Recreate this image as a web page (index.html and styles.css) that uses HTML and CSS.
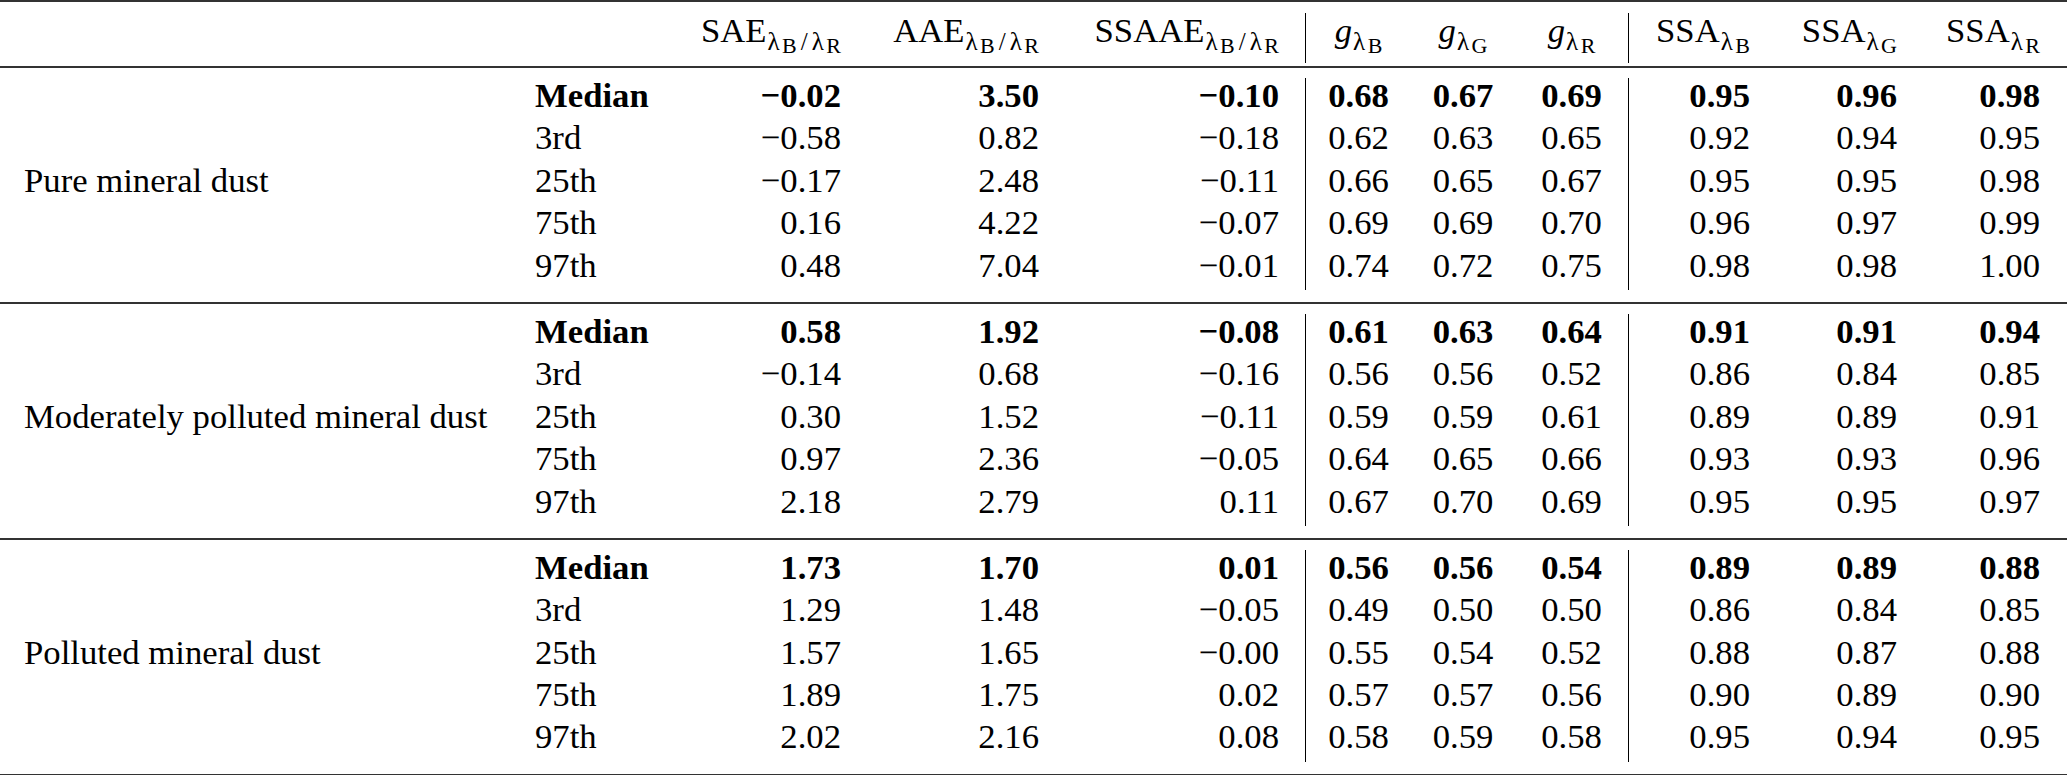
FILE: index.html
```html
<!DOCTYPE html>
<html>
<head>
<meta charset="utf-8">
<link rel="stylesheet" href="styles.css">
</head>
<body>
<div class="tbl">
  <div class="grid head">
    <div class="cell"></div>
    <div class="cell"></div>
    <div class="cell num">SAE<span class="sub">λ<span class="ssub">B</span><span class="slash">/</span>λ<span class="ssub">R</span></span></div>
    <div class="cell num">AAE<span class="sub">λ<span class="ssub">B</span><span class="slash">/</span>λ<span class="ssub">R</span></span></div>
    <div class="cell num wide">SSAAE<span class="sub">λ<span class="ssub">B</span><span class="slash">/</span>λ<span class="ssub">R</span></span></div>
    <div class="cell ctr vl"><i>g</i><span class="sub">λ<span class="ssub">B</span></span></div>
    <div class="cell ctr"><i>g</i><span class="sub">λ<span class="ssub">G</span></span></div>
    <div class="cell ctr"><i>g</i><span class="sub">λ<span class="ssub">R</span></span></div>
    <div class="cell num vl">SSA<span class="sub">λ<span class="ssub">B</span></span></div>
    <div class="cell num">SSA<span class="sub">λ<span class="ssub">G</span></span></div>
    <div class="cell num last">SSA<span class="sub">λ<span class="ssub">R</span></span></div>
  </div>

  <div class="grid grp">
    <div class="cell glabel">Pure mineral dust</div>
    <div class="cell stat b">Median</div><div class="cell num b">−0.02</div><div class="cell num b">3.50</div><div class="cell num wide b">−0.10</div><div class="cell ctr vl b">0.68</div><div class="cell ctr b">0.67</div><div class="cell ctr b">0.69</div><div class="cell num vl b">0.95</div><div class="cell num b">0.96</div><div class="cell num last b">0.98</div>
    <div class="cell stat">3rd</div><div class="cell num">−0.58</div><div class="cell num">0.82</div><div class="cell num wide">−0.18</div><div class="cell ctr vl">0.62</div><div class="cell ctr">0.63</div><div class="cell ctr">0.65</div><div class="cell num vl">0.92</div><div class="cell num">0.94</div><div class="cell num last">0.95</div>
    <div class="cell stat">25th</div><div class="cell num">−0.17</div><div class="cell num">2.48</div><div class="cell num wide">−0.11</div><div class="cell ctr vl">0.66</div><div class="cell ctr">0.65</div><div class="cell ctr">0.67</div><div class="cell num vl">0.95</div><div class="cell num">0.95</div><div class="cell num last">0.98</div>
    <div class="cell stat">75th</div><div class="cell num">0.16</div><div class="cell num">4.22</div><div class="cell num wide">−0.07</div><div class="cell ctr vl">0.69</div><div class="cell ctr">0.69</div><div class="cell ctr">0.70</div><div class="cell num vl">0.96</div><div class="cell num">0.97</div><div class="cell num last">0.99</div>
    <div class="cell stat">97th</div><div class="cell num">0.48</div><div class="cell num">7.04</div><div class="cell num wide">−0.01</div><div class="cell ctr vl">0.74</div><div class="cell ctr">0.72</div><div class="cell ctr">0.75</div><div class="cell num vl">0.98</div><div class="cell num">0.98</div><div class="cell num last">1.00</div>
  </div>

  <div class="grid grp">
    <div class="cell glabel">Moderately polluted mineral dust</div>
    <div class="cell stat b">Median</div><div class="cell num b">0.58</div><div class="cell num b">1.92</div><div class="cell num wide b">−0.08</div><div class="cell ctr vl b">0.61</div><div class="cell ctr b">0.63</div><div class="cell ctr b">0.64</div><div class="cell num vl b">0.91</div><div class="cell num b">0.91</div><div class="cell num last b">0.94</div>
    <div class="cell stat">3rd</div><div class="cell num">−0.14</div><div class="cell num">0.68</div><div class="cell num wide">−0.16</div><div class="cell ctr vl">0.56</div><div class="cell ctr">0.56</div><div class="cell ctr">0.52</div><div class="cell num vl">0.86</div><div class="cell num">0.84</div><div class="cell num last">0.85</div>
    <div class="cell stat">25th</div><div class="cell num">0.30</div><div class="cell num">1.52</div><div class="cell num wide">−0.11</div><div class="cell ctr vl">0.59</div><div class="cell ctr">0.59</div><div class="cell ctr">0.61</div><div class="cell num vl">0.89</div><div class="cell num">0.89</div><div class="cell num last">0.91</div>
    <div class="cell stat">75th</div><div class="cell num">0.97</div><div class="cell num">2.36</div><div class="cell num wide">−0.05</div><div class="cell ctr vl">0.64</div><div class="cell ctr">0.65</div><div class="cell ctr">0.66</div><div class="cell num vl">0.93</div><div class="cell num">0.93</div><div class="cell num last">0.96</div>
    <div class="cell stat">97th</div><div class="cell num">2.18</div><div class="cell num">2.79</div><div class="cell num wide">0.11</div><div class="cell ctr vl">0.67</div><div class="cell ctr">0.70</div><div class="cell ctr">0.69</div><div class="cell num vl">0.95</div><div class="cell num">0.95</div><div class="cell num last">0.97</div>
  </div>

  <div class="grid grp">
    <div class="cell glabel">Polluted mineral dust</div>
    <div class="cell stat b">Median</div><div class="cell num b">1.73</div><div class="cell num b">1.70</div><div class="cell num wide b">0.01</div><div class="cell ctr vl b">0.56</div><div class="cell ctr b">0.56</div><div class="cell ctr b">0.54</div><div class="cell num vl b">0.89</div><div class="cell num b">0.89</div><div class="cell num last b">0.88</div>
    <div class="cell stat">3rd</div><div class="cell num">1.29</div><div class="cell num">1.48</div><div class="cell num wide">−0.05</div><div class="cell ctr vl">0.49</div><div class="cell ctr">0.50</div><div class="cell ctr">0.50</div><div class="cell num vl">0.86</div><div class="cell num">0.84</div><div class="cell num last">0.85</div>
    <div class="cell stat">25th</div><div class="cell num">1.57</div><div class="cell num">1.65</div><div class="cell num wide">−0.00</div><div class="cell ctr vl">0.55</div><div class="cell ctr">0.54</div><div class="cell ctr">0.52</div><div class="cell num vl">0.88</div><div class="cell num">0.87</div><div class="cell num last">0.88</div>
    <div class="cell stat">75th</div><div class="cell num">1.89</div><div class="cell num">1.75</div><div class="cell num wide">0.02</div><div class="cell ctr vl">0.57</div><div class="cell ctr">0.57</div><div class="cell ctr">0.56</div><div class="cell num vl">0.90</div><div class="cell num">0.89</div><div class="cell num last">0.90</div>
    <div class="cell stat">97th</div><div class="cell num">2.02</div><div class="cell num">2.16</div><div class="cell num wide">0.08</div><div class="cell ctr vl">0.58</div><div class="cell ctr">0.59</div><div class="cell ctr">0.58</div><div class="cell num vl">0.95</div><div class="cell num">0.94</div><div class="cell num last">0.95</div>
  </div>
</div>
</body>
</html>
```

FILE: styles.css
```css
html, body {
  margin: 0;
  padding: 0;
  background: #ffffff;
}

body {
  font-family: "Liberation Serif", "Times New Roman", serif;
  font-size: 34.7px;
  color: #000000;
}

.tbl {
  width: 2067px;
  border-top: 2px solid #333333;
}

.grid {
  display: grid;
  grid-template-columns: 514px 186px 162px 198px 245px 106px 104px 113px 143px 147px 149px;
}

.head {
  grid-template-rows: 50px;
  padding: 11px 0 3px;
  border-bottom: 2px solid #333333;
}

.grp {
  grid-template-rows: repeat(5, 42.4px);
  padding: 10px 0 12px;
  border-bottom: 2px solid #333333;
}

.cell {
  box-sizing: border-box;
  line-height: 36.6px;
  white-space: nowrap;
}

.glabel {
  grid-column: 1;
  grid-row: 3;
  padding-left: 24px;
}

.stat {
  grid-column: 2;
  padding-left: 21px;
}

.num {
  text-align: right;
  padding-right: 21px;
}

.num.wide {
  padding-right: 26px;
}

.num.last {
  padding-right: 27px;
}

.ctr {
  text-align: center;
}

.vl {
  border-left: 1px solid #000000;
}

.b {
  font-weight: bold;
}

.sub {
  font-size: 25px;
  line-height: 1;
  vertical-align: -8px;
  letter-spacing: 2.5px;
  margin-left: 1px;
  margin-right: -2.5px;
}

.ssub {
  font-size: 22px;
  line-height: 1;
  vertical-align: -3px;
}

.slash {
  margin: 0 1.5px;
}
```
